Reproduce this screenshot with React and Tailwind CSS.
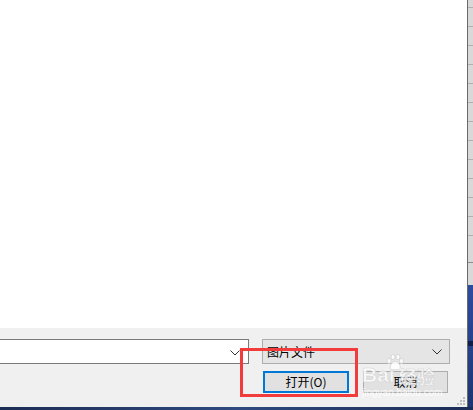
import React from 'react';

const Chevron = ({ className = '' }) => (
  <svg width="10" height="6" viewBox="0 0 10 6" className={className}>
    <path d="M0.5 0.5 L5 5 L9.5 0.5" fill="none" stroke="#333" strokeWidth="1" />
  </svg>
);

// resize grip, bottom right of the dialog
const Grip = () => (
  <svg width="8" height="8" viewBox="0 0 8 8" className="absolute right-[2px] bottom-[2px]">
    {[[6, 0], [3, 3], [6, 3], [0, 6], [3, 6], [6, 6]].map(([x, y]) => (
      <rect key={`${x}-${y}`} x={x} y={y} width="2" height="2" fill="#bdbdbd" />
    ))}
  </svg>
);

// baidu paw from the watermark
const Paw = () => (
  <svg width="18" height="17" viewBox="0 0 18 17" className="absolute left-[24px] top-[-10px]">
    <g fill="rgba(255,255,255,0.85)" stroke="#d2d2d2" strokeWidth="0.8">
      <ellipse cx="3" cy="7" rx="2" ry="2.6" />
      <ellipse cx="7" cy="3" rx="2" ry="2.6" />
      <ellipse cx="12" cy="3" rx="2" ry="2.6" />
      <ellipse cx="15.5" cy="7" rx="2" ry="2.6" />
      <path d="M9.3 7.5 C6 7.5 3.5 12 4.5 14.5 C5.5 16.5 8 15.5 9.3 15.5 C10.6 15.5 13 16.5 14 14.5 C15 12 12.6 7.5 9.3 7.5 Z" />
    </g>
  </svg>
);

const StripRows = () => (
  <div className="flex flex-col">
    <div className="h-[8px] border-b border-[#b0b0b0]" />
    {Array.from({ length: 12 }).map((_, i) => (
      <div key={i} className="h-[19px] border-b border-[#b0b0b0]" />
    ))}
    <div className="h-[27px] border-b border-[#8c8c8c]" />
    <div className="h-[22px]" />
  </div>
);

export default function App() {
  return (
    <div
      className="relative w-[473px] h-[410px] overflow-hidden flex flex-col bg-white"
      style={{ fontFamily: '"Noto Sans CJK SC", "Noto Sans", sans-serif' }}
    >
      <div className="flex flex-1 min-h-0">
        {/* dialog */}
        <div className="w-[467px] flex flex-col">
          <div className="h-[328px] bg-white" />

          <div className="relative flex-1 bg-[#f0f0f0] pt-[11px] flex flex-col gap-[7px]">
            <div className="flex items-center h-[25px]">
              {/* file name combobox, cut off on the left */}
              <div className="w-[249px] h-[25px] bg-white border border-l-0 border-[#7a7a7a] flex items-center justify-end pr-[8px]">
                <Chevron className="mt-[2px]" />
              </div>
              <div className="ml-[13px] w-[188px] h-[25px] bg-[#e5e5e5] border border-[#adadad] flex items-center justify-between pl-[4px] pr-[7px]">
                <span className="text-[12px] text-black leading-none">图片文件</span>
                <Chevron />
              </div>
            </div>

            <div className="flex h-[22px]">
              <button className="ml-[263px] w-[86px] h-[22px] bg-[#e1e1e1] border-2 border-[#0078d7] text-[12px] text-black leading-none flex items-center justify-center">
                打开(O)
              </button>
              <button className="ml-[14px] w-[85px] h-[22px] bg-[#e1e1e1] border border-[#adadad] text-[12px] text-black leading-none flex items-center justify-center">
                取消
              </button>
            </div>

            <Grip />
          </div>
        </div>

        {/* window behind the dialog */}
        <div className="w-[6px] flex flex-col border-l border-[#6b6b6b]">
          <div className="bg-[#d9d9d9]">
            <StripRows />
          </div>
          <div className="flex-1 bg-gradient-to-b from-[#2c4c9e] via-[#24438c] to-[#1d3570] flex flex-col">
            <div className="h-[56px]" />
            <div className="h-[5px] bg-[#0f1f45]" />
          </div>
        </div>
      </div>

      <div className="h-[3px] bg-gradient-to-r from-[#1b2d55] via-[#2f4a80] to-[#1b2d55]" />

      {/* watermark */}
      <div className="absolute left-[362px] top-[364px] flex flex-col pointer-events-none">
        <Paw />
        <div className="flex items-end gap-[4px] text-white/80 leading-none">
          <span className="text-[21px] font-bold" style={{ fontFamily: '"Liberation Sans", sans-serif', WebkitTextStroke: '0.5px #d0d0d0' }}>Bai</span>
          <span className="text-[18px] font-bold" style={{ WebkitTextStroke: '0.5px #d0d0d0' }}>经验</span>
        </div>
        <span className="text-[10px] text-white/80 leading-none mt-[3px]" style={{ fontFamily: '"Liberation Sans", sans-serif' }}>
          jingyan.baidu.com
        </span>
      </div>

      {/* red highlight */}
      <div className="absolute left-[240px] top-[348px] w-[118px] h-[49px] border-[3px] border-[#f23b3b] pointer-events-none" />
    </div>
  );
}
